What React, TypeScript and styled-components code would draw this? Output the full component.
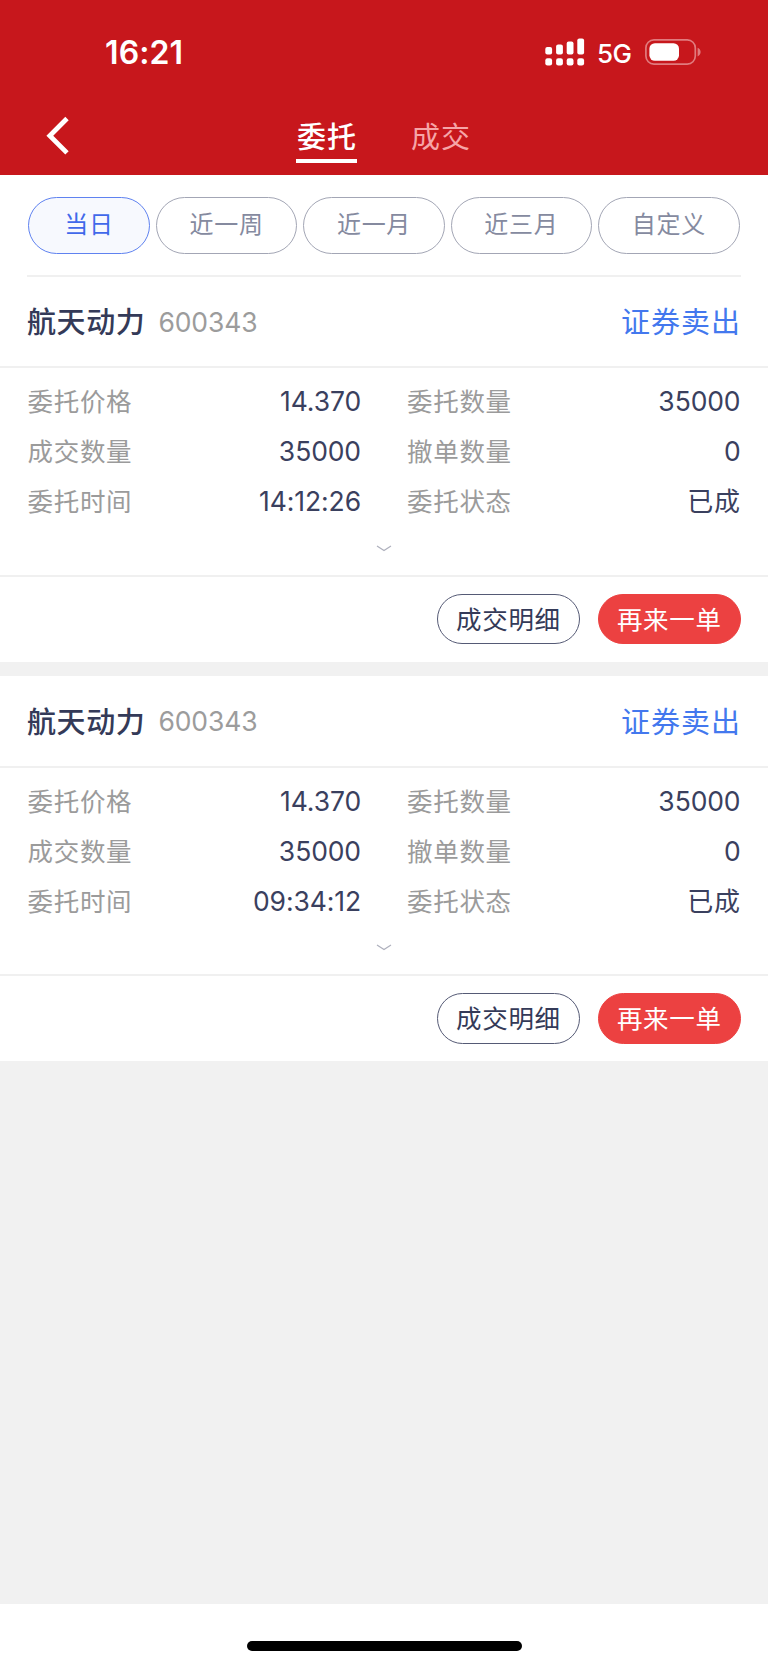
import React from "react";
import styled, { createGlobalStyle } from "styled-components";

const GlobalStyle = createGlobalStyle`
  *, *::before, *::after { box-sizing: border-box; }
  body { margin: 0; background: #fff; font-family: Inter, "Noto Sans CJK SC", sans-serif; }
  button { font-family: inherit; margin: 0; padding: 0; border: 0; background: none; cursor: pointer; }
`;

const Screen = styled.div`
  display: flex;
  flex-direction: column;
  width: 768px;
  height: 1665px;
  overflow: hidden;
  background: #f1f1f1;
`;

const Header = styled.header`
  flex: none;
  height: 174.5px;
  background: #c7171c;
  color: #fff;
`;

const StatusBar = styled.div`
  display: flex;
  align-items: center;
  justify-content: space-between;
  height: 105px;
  padding: 0 67px 0 105px;
`;

const Clock = styled.span`
  padding-top: 1px;
  font-size: 32px;
  font-weight: 600;
  letter-spacing: 0.1px;
  line-height: 40px;
`;

const StatusIcons = styled.div`
  display: flex;
  align-items: center;
  padding-bottom: 2px;
`;

const Network = styled.span`
  width: 48px;
  margin-left: 12px;
  padding-top: 4px;
  font-size: 26px;
  font-weight: 500;
  letter-spacing: -0.5px;
  line-height: 32px;
`;

const NavBar = styled.nav`
  display: grid;
  grid-template-columns: 296px 61px;
  grid-auto-columns: 61px;
  grid-auto-flow: column;
  height: 69px;

  & > :last-child { margin-left: 53px; margin-right: -53px; }
`;

const BackButton = styled.button`
  display: flex;
  padding: 11px 0 0 46px;
`;

const Tab = styled.button<{ $active?: boolean }>`
  height: 58.4px;
  padding: 11px 0 0 1px;
  color: ${(p) => (p.$active ? "#fff" : "#f6a5a7")};
  border-bottom: 4px solid ${(p) => (p.$active ? "#fff" : "transparent")};
  font-size: 29px;
  font-weight: ${(p) => (p.$active ? 500 : 400)};
  letter-spacing: 1px;
  line-height: 43px;
  white-space: nowrap;
`;

const FilterBar = styled.div`
  display: grid;
  grid-template-columns: 122px repeat(4, 141.5px);
  column-gap: 5.9px;
  flex: none;
  height: 102.5px;
  padding: 22.6px 28px 0;
  background: #fff;
`;

const Chip = styled.button<{ $active?: boolean }>`
  height: 56.6px;
  border: 1.5px solid ${(p) => (p.$active ? "#5f82f0" : "#a3a6b5")};
  border-radius: 29px;
  background: ${(p) => (p.$active ? "#f7f9fe" : "#fff")};
  color: ${(p) => (p.$active ? "#4169ea" : "#858a9f")};
  font-size: 24px;
  letter-spacing: 0.7px;
  line-height: 54px;
`;

const Card = styled.article`
  display: flex;
  flex-direction: column;
  flex: none;
  height: 385px;
  margin-bottom: 14px;
  background: #fff;

  &:last-of-type { margin-bottom: 0; }
`;

const CardHeader = styled.div<{ $inset?: boolean }>`
  display: flex;
  align-items: center;
  flex: none;
  height: ${(p) => (p.$inset ? "91px" : "91.5px")};
  padding: ${(p) => (p.$inset ? "0" : "1px")} 27px 0;
  border-bottom: 2px solid #f0f0f0;

  &::before {
    content: "";
    align-self: flex-start;
    width: ${(p) => (p.$inset ? "714px" : "0")};
    height: ${(p) => (p.$inset ? "2px" : "0")};
    margin-right: ${(p) => (p.$inset ? "-714px" : "0")};
    margin-top: -2px;
    background: #f0f0f0;
  }
`;

const StockName = styled.h2`
  margin: 0;
  padding-bottom: 2.5px;
  color: #343a58;
  font-size: 29px;
  font-weight: 500;
  letter-spacing: 0.6px;
`;

const StockCode = styled.span`
  margin-left: 13px;
  color: #9c9c9c;
  font-size: 26.5px;
  letter-spacing: -0.1px;
`;

const Side = styled.span`
  margin-left: auto;
  padding-bottom: 2.5px;
  color: #4378ee;
  font-size: 29px;
  letter-spacing: 1px;
`;

const Details = styled.dl`
  display: grid;
  flex: none;
  grid-template-columns: 334px 334px;
  column-gap: 45.5px;
  grid-auto-rows: 49.8px;
  margin: 0;
  padding: 8.6px 27px 0;
`;

const Field = styled.div`
  display: flex;
  align-items: center;
  justify-content: space-between;
`;

const Label = styled.dt`
  padding: 0 0 3px 0.5px;
  color: #9b9b9b;
  font-size: 25.5px;
  letter-spacing: 0.7px;
`;

const Value = styled.dd<{ $text?: boolean }>`
  margin: 0;
  padding-bottom: ${(p) => (p.$text ? "3px" : "0")};
  color: #3a405e;
  font-size: ${(p) => (p.$text ? "26px" : "26.5px")};
  letter-spacing: ${(p) => (p.$text ? "0.6px" : "-0.1px")};
`;

const Expand = styled.button`
  display: flex;
  justify-content: center;
  flex: none;
  width: 100%;
  height: 49px;
  padding-top: 19px;
`;

const Actions = styled.div`
  display: flex;
  justify-content: flex-end;
  flex: 1;
  gap: 17.5px;
  padding: 17px 27px 0;
  border-top: 2px solid #f0f0f0;
`;

const ActionButton = styled.button<{ $primary?: boolean }>`
  width: 143.4px;
  height: 50.5px;
  border: 1.2px solid ${(p) => (p.$primary ? "#ec4141" : "#555a75")};
  border-radius: 26px;
  background: ${(p) => (p.$primary ? "#ec4141" : "#fff")};
  color: ${(p) => (p.$primary ? "#fff" : "#343a58")};
  font-size: 25.5px;
  letter-spacing: 0.7px;
  line-height: 47px;
`;

const HomeArea = styled.footer`
  display: flex;
  justify-content: center;
  flex: none;
  height: 61.5px;
  margin-top: auto;
  padding-top: 37.5px;
  background: #fff;
`;

const HomeIndicator = styled.div`
  width: 275px;
  height: 9.5px;
  border-radius: 5px;
  background: #000;
`;

const SignalIcon = () => (
  <svg width="40" height="28" viewBox="0 0 40 28" fill="#fff">
    <rect x="0.3" y="9" width="6.8" height="7.6" rx="2" />
    <rect x="11.1" y="6.6" width="6.8" height="10" rx="2" />
    <rect x="21.7" y="3.6" width="6.8" height="13" rx="2" />
    <rect x="32.3" y="0.4" width="6.8" height="16.2" rx="2" />
    {[0.3, 11.1, 21.7, 32.3].map((x) => (
      <rect key={x} x={x} y="20.2" width="6.8" height="7.2" rx="2.2" />
    ))}
  </svg>
);

const BatteryIcon = () => (
  <svg width="56" height="26" viewBox="0 0 56 26">
    <rect x="0.9" y="0.9" width="49.4" height="24.2" rx="8" fill="none" stroke="#e17b7e" strokeWidth="1.7" />
    <rect x="4.4" y="4.2" width="29.6" height="17.6" rx="5.5" fill="#fff" />
    <path d="M52.6 8.8c4 1.6 4 7 0 8.6z" fill="#e17b7e" />
  </svg>
);

const BackIcon = () => (
  <svg width="24" height="40" viewBox="0 0 24 40">
    <path d="M21 2.5 3.8 19.7 21 36.9" fill="none" stroke="#fff" strokeWidth="4.8" />
  </svg>
);

const ChevronDown = () => (
  <svg width="16" height="8" viewBox="0 0 16 8">
    <path d="M1 1 8 5.6 15 1" fill="none" stroke="#aeb0bd" strokeWidth="1.2" />
  </svg>
);

const filters = ["当日", "近一周", "近一月", "近三月", "自定义"];

const orders = [{ time: "14:12:26" }, { time: "09:34:12" }].map(({ time }) => ({
  name: "航天动力",
  code: "600343",
  side: "证券卖出",
  fields: [
    { label: "委托价格", value: "14.370" },
    { label: "委托数量", value: "35000" },
    { label: "成交数量", value: "35000" },
    { label: "撤单数量", value: "0" },
    { label: "委托时间", value: time },
    { label: "委托状态", value: "已成", text: true },
  ],
}));

export default function App() {
  return (
    <>
      <GlobalStyle />
      <Screen>
        <Header>
          <StatusBar>
            <Clock>16:21</Clock>
            <StatusIcons>
              <SignalIcon />
              <Network>5G</Network>
              <BatteryIcon />
            </StatusIcons>
          </StatusBar>
          <NavBar>
            <BackButton aria-label="返回"><BackIcon /></BackButton>
            <Tab $active>委托</Tab>
            <Tab>成交</Tab>
          </NavBar>
        </Header>
        <FilterBar>
          {filters.map((label, i) => (
            <Chip key={label} $active={i === 0}>{label}</Chip>
          ))}
        </FilterBar>
        {orders.map((order, i) => (
          <Card key={i}>
            <CardHeader $inset={i === 0}>
              <StockName>{order.name}</StockName>
              <StockCode>{order.code}</StockCode>
              <Side>{order.side}</Side>
            </CardHeader>
            <Details>
              {order.fields.map(({ label, value, text }) => (
                <Field key={label}>
                  <Label>{label}</Label>
                  <Value $text={text}>{value}</Value>
                </Field>
              ))}
            </Details>
            <Expand aria-label="展开"><ChevronDown /></Expand>
            <Actions>
              <ActionButton>成交明细</ActionButton>
              <ActionButton $primary>再来一单</ActionButton>
            </Actions>
          </Card>
        ))}
        <HomeArea><HomeIndicator /></HomeArea>
      </Screen>
    </>
  );
}
